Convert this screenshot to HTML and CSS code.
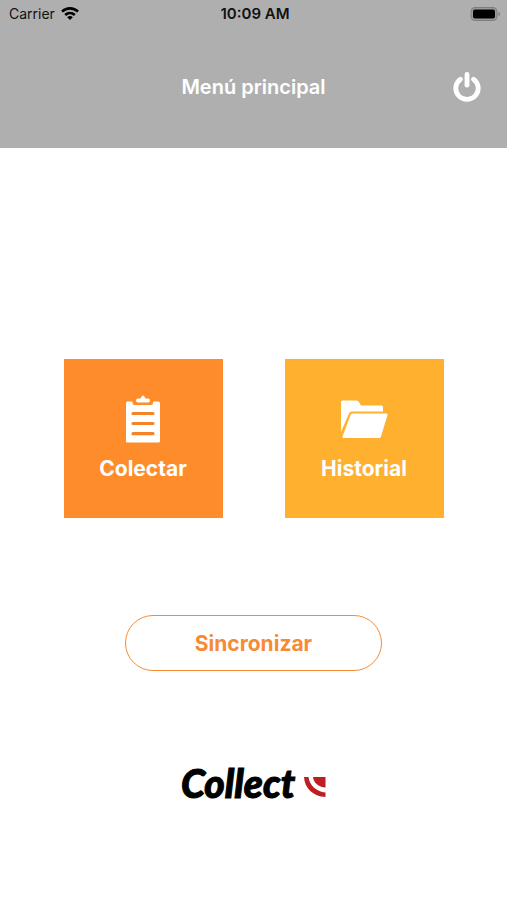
FILE: index.html
```html
<!DOCTYPE html>
<html lang="es">
<head>
    <meta charset="UTF-8">
    <meta name="viewport" content="width=device-width, initial-scale=1.0">
    <title>Menú principal</title>
    <link rel="stylesheet" href="styles.css">
</head>
<body>

<header class="header">
    <div class="status-bar">
        <div class="carrier">
            <span>Carrier</span>
            <svg width="18" height="14" viewBox="0 0 18 14" fill="none" stroke="#000" stroke-width="2.6">
                <path d="M1 4.700C5.500 0.200 12.500 0.200 17 4.700"/>
                <path d="M4.200 8C6.900 5.300 11.100 5.300 13.800 8"/>
                <path d="M9 13L6.200 10.200C7.800 8.700 10.200 8.700 11.800 10.200Z" fill="#000" stroke="none"/>
            </svg>
        </div>
        <div class="time">10:09 AM</div>
        <div class="battery">
            <svg width="31" height="14" viewBox="0 0 31 14">
                <rect x="1" y="0.500" width="26" height="13" rx="4" fill="#9a9a9a" stroke="#7d7d7d"/>
                <rect x="3" y="2.500" width="22" height="9" rx="2" fill="#000"/>
                <path d="M28.500 5C30.500 5.500 30.500 8.500 28.500 9Z" fill="#7d7d7d"/>
            </svg>
        </div>
    </div>
    <div class="title-bar">
        <h1 class="title">Menú principal</h1>
        <button class="power" type="button" aria-label="Salir">
            <svg width="28" height="30" viewBox="0 0 28 30" fill="none" stroke="#fff" stroke-width="4.800" stroke-linecap="round">
                <path d="M7.400 7.200A11.200 11.200 0 1 0 20.600 7.200"/>
                <path d="M14 2.400V13.200"/>
            </svg>
        </button>
    </div>
</header>

<main class="main">
    <div class="tiles">
        <button class="tile collect" type="button">
            <svg width="48" height="48" viewBox="0 0 48 48">
                <path fill="#fff" d="M8.500 6.500H13.500V8Q13.500 10 15.500 10H32Q34 10 34 8V6.500H39.500Q41 6.500 41 8V46Q41 47.500 39.500 47.500H8.500Q7 47.500 7 46V8Q7 6.500 8.500 6.500Z"/>
                <path fill="#fff" d="M17 5.500Q17 3.500 19 3.500H21.500L23 1Q24 0 25 1L26.500 3.500H29Q31 3.500 31 5.500Q31 7.500 29 7.500H19Q17 7.500 17 5.500Z"/>
                <path stroke="#f58428" stroke-width="3.200" stroke-linecap="round" d="M14 18.500H34M14 28.500H34M14 38.700H34"/>
            </svg>
            <span>Colectar</span>
        </button>
        <button class="tile history" type="button">
            <svg width="48" height="48" viewBox="0 0 48 48">
                <path fill="#fff" d="M1 37V7Q1 5.500 2.500 5.500H16.500Q18 5.500 19 7L21 10.500H41.500Q43 10.500 43 12V16.500H12Q10 16.500 9 18.500Z"/>
                <path fill="#fff" d="M12.500 18.500H46.500Q48 18.500 47.500 20L41 41.500Q40.500 43 39 43H3.500Q2 43 2.500 41.500L10.500 20Q11 18.500 12.500 18.500Z"/>
            </svg>
            <span>Historial</span>
        </button>
    </div>

    <button class="sync" type="button">Sincronizar</button>

    <div class="logo">
        <span>Collect</span>
        <svg width="22" height="20" viewBox="0 0 22 20" fill="#bd1e24">
            <path d="M0 0H4.500C5.500 8 12 14.500 21.500 15.500V20C9 19.500 0.500 11 0 0Z"/>
            <path d="M9 0H21.500V10.500C14.500 10 9.500 6 9 0Z"/>
        </svg>
    </div>
</main>

</body>
</html>
```

FILE: styles.css
```css
body, html {
    margin: 0;
    background: #fff;
    font-family: Inter, "Liberation Sans", sans-serif;
}
button {
    margin: 0;
    padding: 0;
    border: none;
    background: none;
    font-family: inherit;
    cursor: pointer;
}
svg {
    display: block;
}
.header {
    background: #afafaf;
    padding-bottom: 2px;
}
.status-bar {
    display: grid;
    grid-template-columns: 1fr auto 1fr;
    align-items: center;
    height: 27px;
    padding: 0 6px 0 9px;
    font-size: 15px;
    color: #111;
}
.carrier {
    display: flex;
    align-items: center;
    gap: 6px;
    font-size: 14px;
}
.time {
    font-weight: 600;
}
.battery {
    justify-self: end;
}
.title-bar {
    display: grid;
    grid-template-columns: 1fr auto 1fr;
    align-items: center;
    height: 119px;
    padding: 0 26px;
}
.title {
    grid-column: 2;
    margin: 0;
    font-size: 20px;
    font-weight: 600;
    color: #fff;
}
.power {
    justify-self: end;
}
.main {
    display: flex;
    flex-direction: column;
    align-items: center;
    padding: 211px 24px 64px;
}
.tiles {
    display: flex;
    justify-content: center;
    gap: 62px;
}
.tile {
    display: flex;
    flex-direction: column;
    align-items: center;
    justify-content: center;
    gap: 12px;
    width: 159px;
    aspect-ratio: 1;
    font-size: 21px;
    line-height: 28px;
    font-weight: 700;
    color: #fff;
}
.collect {
    background: #ff8c2b;
}
.history {
    background: #ffb02e;
}
.sync {
    width: 56%;
    min-height: 56px;
    margin-top: 97px;
    border: 1px solid #f58b34;
    border-radius: 28px;
    font-size: 21px;
    font-weight: 700;
    color: #f58b34;
}
.logo {
    display: flex;
    align-items: flex-end;
    gap: 9px;
    margin-top: 90px;
    font-family: Lato, sans-serif;
    font-size: 39px;
    line-height: 44px;
    font-weight: 900;
    font-style: italic;
    color: #000;
    -webkit-text-stroke: 1px #000;
}
.logo svg {
    margin-bottom: 8px;
}
```
